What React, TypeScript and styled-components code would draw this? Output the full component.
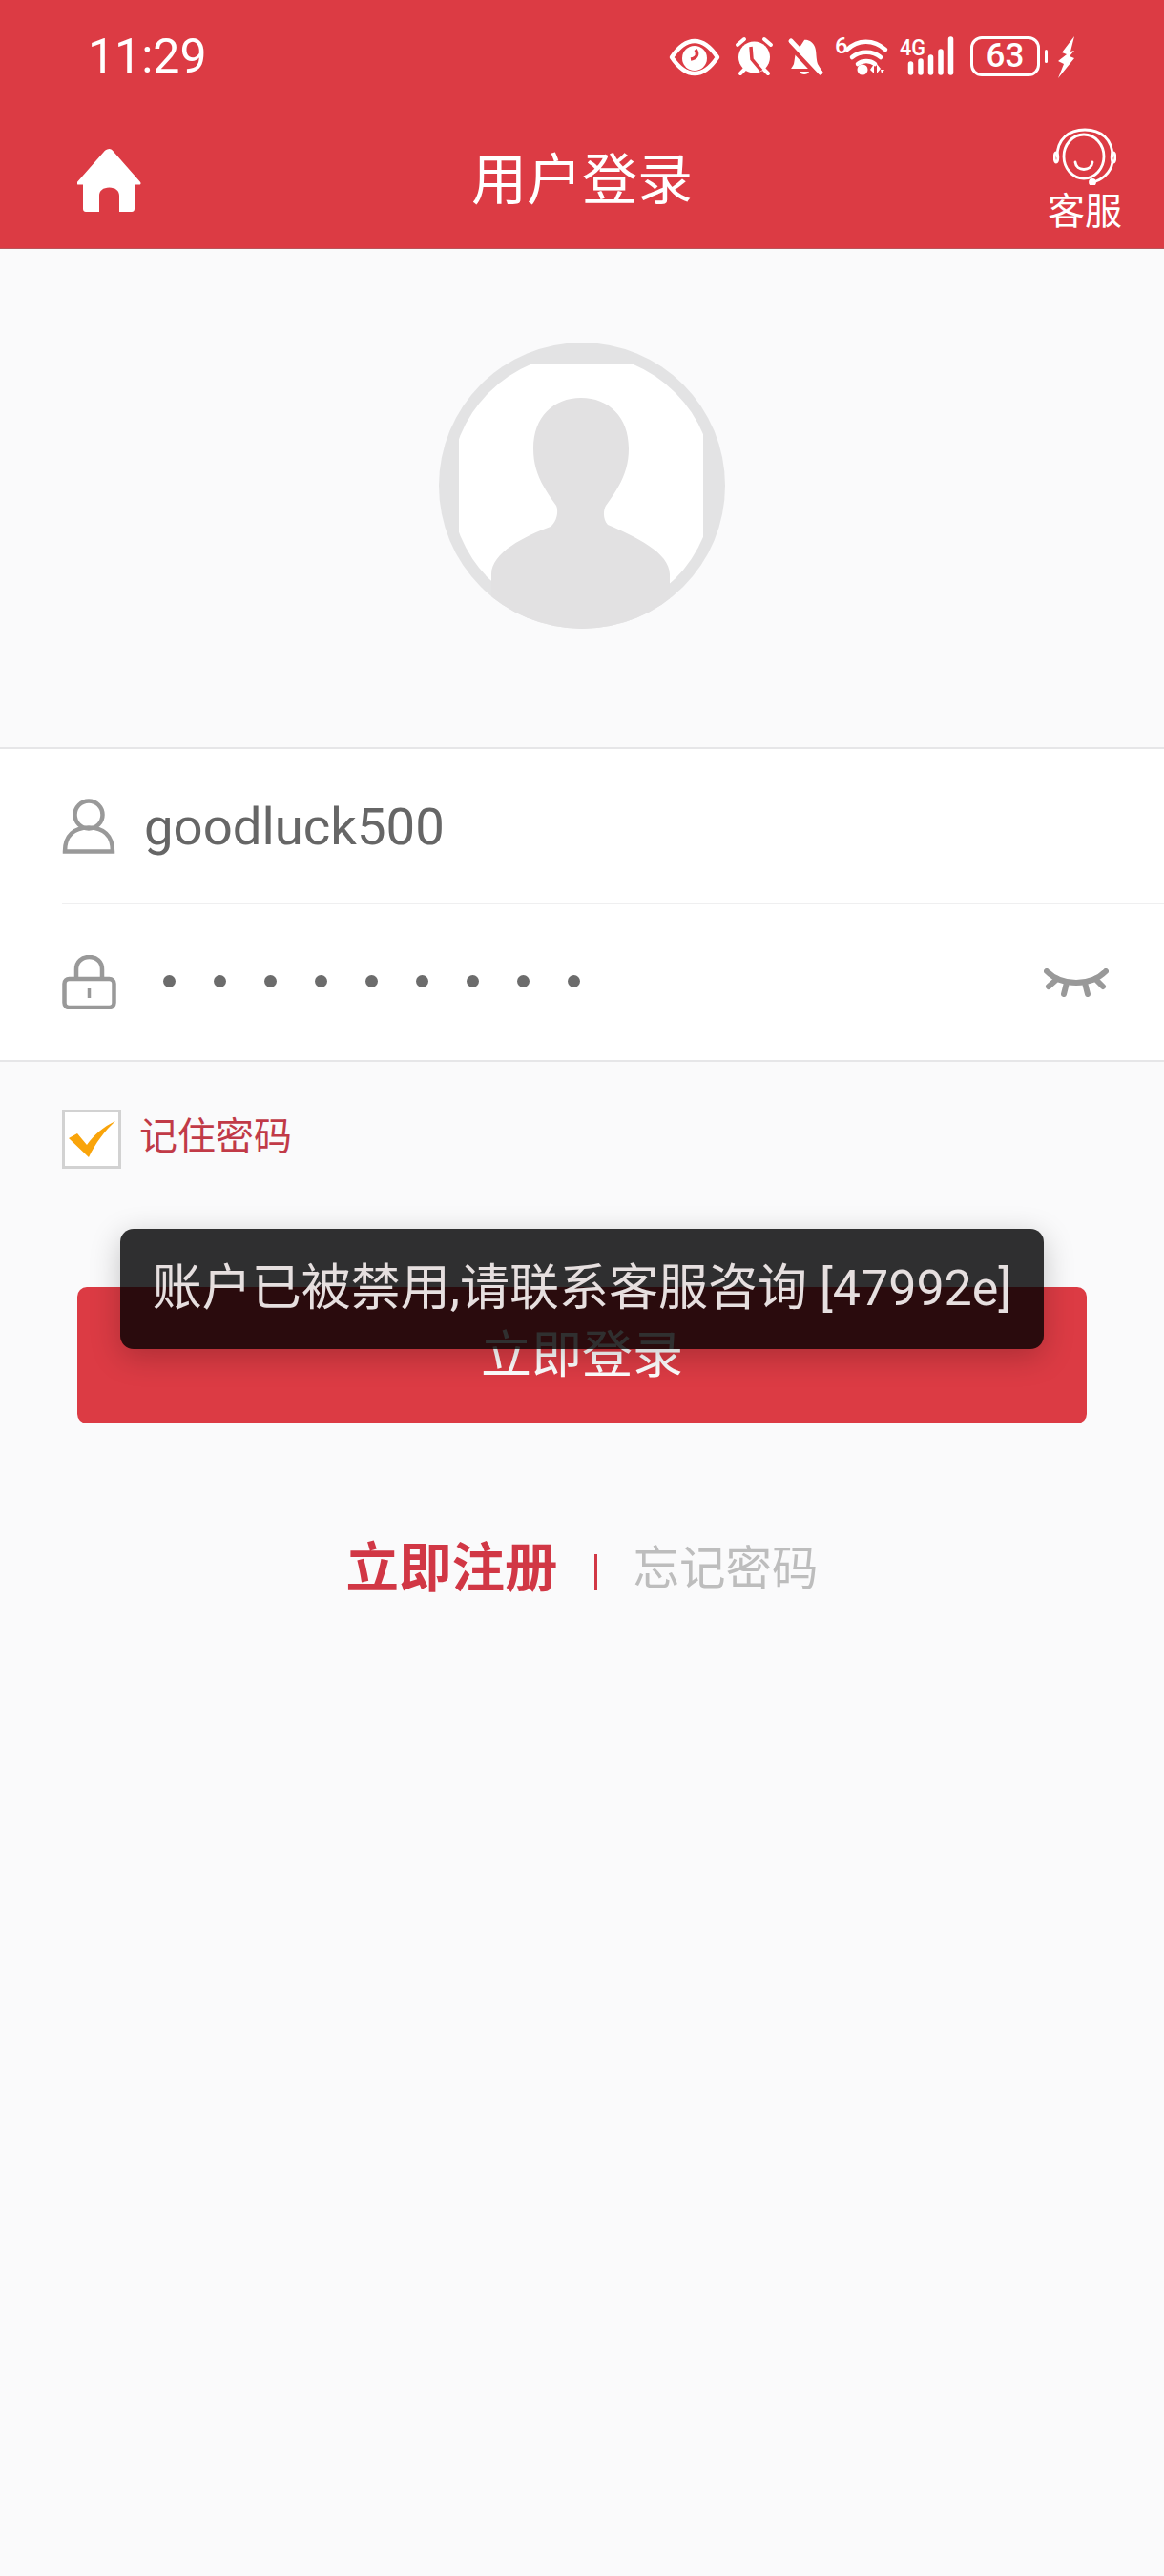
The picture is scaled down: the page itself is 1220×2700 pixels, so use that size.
import React from "react";
import styled, { createGlobalStyle } from "styled-components";

const RED = "#dc3b44";

const GlobalStyle = createGlobalStyle`
  html, body {
    margin: 0;
    padding: 0;
    background: #fafafb;
  }
  body {
    font-family: Roboto, "Noto Sans CJK SC", sans-serif;
  }
`;

const Page = styled.div`
  width: 1220px;
  min-height: 2700px;
  background: #fafafb;
  overflow: hidden;
`;

const Header = styled.header`
  background: ${RED};
  height: 261px;
  box-sizing: border-box;
  border-bottom: 1px solid #b9555b;
`;

const StatusBar = styled.div`
  height: 118px;
  box-sizing: border-box;
  padding: 38px 93px 0 92px;
  display: flex;
  justify-content: space-between;
  align-items: flex-start;
`;

const Clock = styled.span`
  color: #fff;
  font-size: 50px;
  line-height: 42px;
`;

const StatusIcons = styled.div`
  display: flex;
  align-items: flex-start;
  color: #fff;
`;

const StatusIcon = styled.svg<{ $gap: number }>`
  display: block;
  margin-left: ${(p) => p.$gap}px;
  overflow: visible;
`;

const Battery = styled.div`
  width: 73px;
  height: 42px;
  margin-left: 17px;
  box-sizing: border-box;
  border: 3.5px solid #fff;
  border-radius: 12px;
  color: #fff;
  font-size: 35px;
  font-weight: 500;
  line-height: 35px;
  text-align: center;
`;

const NavBar = styled.nav`
  height: 142px;
  display: grid;
  grid-template-columns: 1fr auto 1fr;
  align-items: center;
  padding: 0 44px;
`;

const HomeIcon = styled.svg`
  display: block;
  margin-left: 37px;
`;

const Title = styled.h1`
  margin: 0;
  color: #fff;
  font-size: 58px;
  font-weight: 400;
  line-height: 60px;
`;

const ServiceLink = styled.a`
  justify-self: end;
  display: flex;
  flex-direction: column;
  align-items: center;
  color: #fff;
  font-size: 39px;
  line-height: 56px;
  margin-top: 6px;
`;

const AvatarSection = styled.div`
  display: flex;
  justify-content: center;
  padding: 98px 0 124px;
`;

const Form = styled.div`
  background: #fff;
  border-top: 2px solid #e6e6e8;
  border-bottom: 2px solid #e6e6e8;
`;

const FieldRow = styled.div<{ $divided?: boolean }>`
  height: 163px;
  box-sizing: border-box;
  margin-left: 65px;
  padding-right: 58px;
  display: flex;
  align-items: center;
  border-bottom: ${(p) => (p.$divided ? "2px solid #efeff0" : "none")};
`;

const FieldIcon = styled.svg`
  display: block;
  flex: none;
  width: 57px;
`;

const FieldValue = styled.span`
  margin-left: 29px;
  color: #666;
  font-size: 54.5px;
  line-height: 60px;
`;

const PasswordDots = styled.div`
  flex: 1;
  display: flex;
  gap: 40px;
  margin-left: 49px;
  margin-top: -2px;
`;

const Dot = styled.i`
  width: 13px;
  height: 13px;
  border-radius: 50%;
  background: #6c6c6c;
`;

const Remember = styled.label`
  display: flex;
  align-items: center;
  gap: 19px;
  margin: 50px 0 0 65px;
`;

const CheckBox = styled.span`
  width: 62px;
  height: 62px;
  box-sizing: border-box;
  border: 3px solid #d2d2d2;
  background: #fff;
  display: flex;
  align-items: center;
  justify-content: center;
`;

const RememberText = styled.span`
  color: #c13a47;
  font-size: 40px;
  line-height: 46px;
  margin-top: -4px;
`;

const ButtonWrap = styled.div`
  position: relative;
  margin: 124px 81px 0;
`;

const LoginButton = styled.button`
  display: block;
  width: 100%;
  height: 143px;
  border: none;
  border-radius: 10px;
  background: ${RED};
  color: #fff;
  font: inherit;
  font-size: 53px;
  line-height: 60px;
  padding: 0;
`;

const Toast = styled.div`
  position: absolute;
  left: 45px;
  right: 45px;
  top: -61px;
  height: 126px;
  box-sizing: border-box;
  padding-bottom: 12px;
  border-radius: 14px;
  background: rgba(0, 0, 0, 0.81);
  box-shadow: 0 8px 32px rgba(0, 0, 0, 0.22);
  color: #e6dfdf;
  font-size: 52px;
  display: flex;
  align-items: center;
  justify-content: center;
  white-space: nowrap;
`;

const Links = styled.div`
  display: flex;
  align-items: center;
  justify-content: center;
  margin-top: 121px;
`;

const RegisterLink = styled.a`
  color: #d13745;
  font-size: 55.5px;
  font-weight: 700;
  line-height: 64px;
`;

const Separator = styled.span`
  width: 3px;
  height: 38px;
  margin: 6px 38px 0;
  background: #d13745;
`;

const ForgotLink = styled.a`
  color: #bdbdbd;
  font-size: 48.5px;
  line-height: 64px;
`;

const smallSvgText = { fontFamily: "Roboto, sans-serif", fill: "#fff", fontWeight: 500 };

const App = () => {
  return (
    <Page>
      <GlobalStyle />
      <Header>
        <StatusBar>
          <Clock>11:29</Clock>
          <StatusIcons>
            {/* eye comfort */}
            <StatusIcon $gap={0} width="52" height="40" viewBox="0 0 52 40">
              <path d="M2 22C10 10 18 5 26 5s16 5 24 17c-8 12-16 17-24 17S10 34 2 22Z" fill="none" stroke="#fff" strokeWidth="4.500" strokeLinejoin="round" />
              <circle cx="26" cy="23" r="13" fill="#fff" />
              <path d="M27 14c3 4 2 9-5 10" fill="none" stroke={RED} strokeWidth="3.500" />
            </StatusIcon>
            {/* alarm */}
            <StatusIcon $gap={16} width="41" height="42" viewBox="0 0 41 42">
              <circle cx="20.500" cy="22" r="16.500" fill="#fff" />
              <path d="M3 9 10 3M38 9 31 3M6 39l5-5M35 39l-5-5" stroke="#fff" strokeWidth="4" strokeLinecap="round" />
              <path d="M17 11l1 13 10 12" fill="none" stroke={RED} strokeWidth="3.500" />
            </StatusIcon>
            {/* muted bell */}
            <StatusIcon $gap={16} width="35" height="42" viewBox="0 0 35 42">
              <path d="M16 4c-1 0 7-2 11 7 2 5 1 12 3 18l3 5H3c-2 0 1-2 2-5 1-5 1-8 2-11Z" fill="#fff" />
              <path d="M11 37h10c-1 4-9 4-10 0Z" fill="#fff" />
              <path d="M0 7 31 40" stroke={RED} strokeWidth="8" />
              <path d="M2 5 33 38" stroke="#fff" strokeWidth="5" strokeLinecap="round" />
            </StatusIcon>
            {/* wifi 6 */}
            <StatusIcon $gap={13} width="55" height="40" viewBox="0 0 55 40">
              <text x="0" y="18" fontSize="24" style={smallSvgText}>6</text>
              <path d="M13 14C24 3 41 3 53 14M18 22c8-7 22-7 30 0M24 29c5-4 13-4 18 0" fill="none" stroke="#fff" strokeWidth="4.500" strokeLinecap="round" />
              <circle cx="29" cy="35" r="5.500" fill="#fff" />
              <path d="M41 39l-4-4 4-6ZM44 29v10l4-5ZM48 35h4l-3 4Z" fill="#fff" />
            </StatusIcon>
            {/* cellular */}
            <StatusIcon $gap={13} width="57" height="40" viewBox="0 0 57 40">
              <text x="0" y="20" fontSize="23" style={smallSvgText} textLength="27" lengthAdjust="spacingAndGlyphs">4G</text>
              <path d="M11.500 29v9M22 26v12M32.500 22v16M43 16v22M53.500 3v35" stroke="#fff" strokeWidth="5.500" strokeLinecap="round" />
            </StatusIcon>
            <Battery>63</Battery>
            <StatusIcon $gap={5} width="3" height="42" viewBox="0 0 3 42">
              <rect x="0" y="14" width="3" height="14" rx="1.500" fill="#fff" />
            </StatusIcon>
            {/* charging */}
            <StatusIcon $gap={10} width="19" height="44" viewBox="0 0 19 44">
              <path d="M18 0 5 17l5 2-9 7 6 3-6 15 17-21-5-2 5-6-4 1Z" fill="#fff" />
            </StatusIcon>
          </StatusIcons>
        </StatusBar>
        <NavBar>
          <HomeIcon width="67" height="66" viewBox="0 0 67 66">
            <path d="M33.500 0c1.500 0 2.500.7 3.500 1.800l29 33c1 1.300.5 2.700-1 2.700h-5v25.500c0 1.700-1.300 3-3 3H44V49c0-5-4-8.500-10.500-8.500S23 44 23 49v17H9c-1.700 0-3-1.300-3-3V37.500H1c-1.500 0-2-1.400-1-2.700l29-33C30.900.7 32 0 33.500 0Z" fill="#fff" />
          </HomeIcon>
          <Title>用户登录</Title>
          <ServiceLink>
            <svg width="66" height="60" viewBox="0 0 66 60" fill="none" stroke="#fff" strokeWidth="2.800" strokeLinecap="round">
              <path d="M4 30C4 12 16 2 33 2s29 10 29 28" />
              <ellipse cx="32" cy="30" rx="21" ry="23" />
              <path d="M23 36c1 10 17 10 18 0" />
              <ellipse cx="3" cy="31" rx="1.800" ry="5" />
              <ellipse cx="63" cy="31" rx="1.800" ry="5" />
              <path d="M62 36C60 48 50 55 41 57" />
              <circle cx="41" cy="57" r="2.500" fill="#fff" />
            </svg>
            客服
          </ServiceLink>
        </NavBar>
      </Header>

      <AvatarSection>
        <svg width="300" height="300" viewBox="0 0 300 300">
          <defs>
            <clipPath id="avatar-clip">
              <circle cx="150" cy="150" r="150" />
            </clipPath>
            <clipPath id="avatar-inner">
              <circle cx="150" cy="150" r="138" />
            </clipPath>
          </defs>
          <circle cx="150" cy="150" r="150" fill="#e3e3e4" />
          <rect x="21" y="22" width="256" height="278" fill="#fff" clipPath="url(#avatar-inner)" />
          <path
            d="M149 58C120 58 99 78 99 111c0 24 9 39 24 60 2 4 2 15-6 22-27 10-62 27-62 50v57h187v-57c0-23-37-40-65-52-5-5-5-15-2-20 15-21 24-36 24-60 0-33-21-53-50-53Z"
            fill="#e2e1e2"
            clipPath="url(#avatar-clip)"
          />
        </svg>
      </AvatarSection>

      <Form>
        <FieldRow $divided>
          <FieldIcon height="58" viewBox="0 0 57 58" fill="none" stroke="#999" strokeWidth="4.500">
            <circle cx="28" cy="17" r="14.500" />
            <path d="M3 55.500c0-17 10-25 25-25s25 8 25 25Z" />
          </FieldIcon>
          <FieldValue>goodluck500</FieldValue>
        </FieldRow>
        <FieldRow>
          <FieldIcon height="57" viewBox="0 0 57 57" fill="none" stroke="#999" strokeWidth="4.500">
            <path d="M15 26V15C15 7 21 2 28.500 2S42 7 42 15v11" />
            <rect x="2.500" y="25" width="52" height="30" rx="5" />
            <path d="M28.500 35v10" strokeWidth="3.500" />
          </FieldIcon>
          <PasswordDots>
            {Array.from({ length: 9 }).map((_, i) => (
              <Dot key={i} />
            ))}
          </PasswordDots>
          <svg width="68" height="30" viewBox="0 0 68 30" fill="none" stroke="#999" strokeWidth="6" strokeLinecap="round">
            <path d="M3 3c8 8 18 12 31 12S57 11 65 3" />
            <path d="M14 11 5 19M24 15l-3 12M43 15l3 12M54 11l8 8" />
          </svg>
        </FieldRow>
      </Form>

      <Remember>
        <CheckBox>
          <svg width="49" height="38" viewBox="0 0 49 38">
            <path d="M0 18 9 13 19 25C26 15 36 6 49 0 38 10 28 23 21 38Z" fill="#f9a40a" />
          </svg>
        </CheckBox>
        <RememberText>记住密码</RememberText>
      </Remember>

      <ButtonWrap>
        <LoginButton>立即登录</LoginButton>
        <Toast>账户已被禁用,请联系客服咨询 [47992e]</Toast>
      </ButtonWrap>

      <Links>
        <RegisterLink>立即注册</RegisterLink>
        <Separator />
        <ForgotLink>忘记密码</ForgotLink>
      </Links>
    </Page>
  );
};

export default App;
